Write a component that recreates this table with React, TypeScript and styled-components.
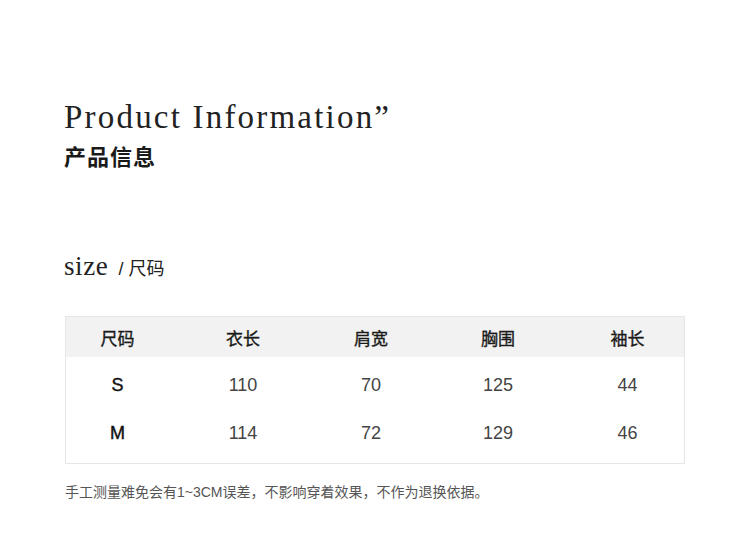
import styled, { createGlobalStyle } from 'styled-components';

const GlobalStyle = createGlobalStyle`
  html, body {
    margin: 0;
    padding: 0;
    background: #ffffff;
  }
`;

const sans = `Arial, "Liberation Sans", "Noto Sans CJK SC", sans-serif`;
const serif = `"Liberation Serif", "Times New Roman", "Noto Sans CJK SC", serif`;

const columns = ['尺码', '衣长', '肩宽', '胸围', '袖长'];
const rows = [
  ['S', '110', '70', '125', '44'],
  ['M', '114', '72', '129', '46'],
];

const Page = styled.div`
  width: 750px;
  height: 556px;
  box-sizing: border-box;
  padding: 98px 65px 0 64px;
  display: flex;
  flex-direction: column;
  color: #222;
`;

const Title = styled.h1`
  margin: 0;
  font-family: ${serif};
  font-weight: 400;
  font-size: 33px;
  line-height: 38px;
  letter-spacing: 2.2px;
  color: #222;
`;

const Subtitle = styled.h2`
  margin: 7px 0 0;
  font-family: ${sans};
  font-weight: 700;
  font-size: 22px;
  line-height: 30px;
  letter-spacing: 1px;
  color: #1a1a1a;
`;

const SizeLabel = styled.div`
  margin-top: 78px;
  display: flex;
  align-items: baseline;
  gap: 10px;
`;

const SizeWord = styled.span`
  font-family: ${serif};
  font-size: 27px;
  line-height: 30px;
  letter-spacing: 0.6px;
  color: #222;
`;

const SizeCn = styled.span`
  font-family: ${sans};
  font-size: 18px;
  color: #222;
`;

const Table = styled.div`
  margin: 35px 0 0 1px;
  width: 620px;
  box-sizing: border-box;
  border: 1px solid #e6e6e6;
  display: flex;
  flex-direction: column;
`;

const Row = styled.div`
  display: grid;
  grid-template-columns: 103px 148px 108px 146px 1fr;
`;

const HeadRow = styled(Row)`
  height: 40px;
  background: #f2f2f2;
`;

const Body = styled.div`
  padding: 4px 0 6px;
`;

const HeadCell = styled.div`
  display: flex;
  align-items: center;
  justify-content: center;
  font-family: ${sans};
  font-size: 17px;
  color: #1a1a1a;
  -webkit-text-stroke: 0.35px #1a1a1a;
`;

const Cell = styled.div<{ $strong?: boolean }>`
  height: 48px;
  display: flex;
  align-items: center;
  justify-content: center;
  font-family: ${sans};
  font-size: 18px;
  color: ${({ $strong }) => ($strong ? '#111' : '#444')};
  -webkit-text-stroke: ${({ $strong }) => ($strong ? '0.4px #111' : '0')};
`;

const Note = styled.p`
  margin: 18px 0 0 1px;
  font-family: ${sans};
  font-size: 14px;
  line-height: 20px;
  color: #555;
`;

export default function App() {
  return (
    <>
      <GlobalStyle />
      <Page>
        <Title>Product Information”</Title>
        <Subtitle>产品信息</Subtitle>
        <SizeLabel>
          <SizeWord>size</SizeWord>
          <SizeCn>/ 尺码</SizeCn>
        </SizeLabel>
        <Table>
          <HeadRow>
            {columns.map((c) => (
              <HeadCell key={c}>{c}</HeadCell>
            ))}
          </HeadRow>
          <Body>
            {rows.map((r) => (
              <Row key={r[0]}>
                {r.map((v, i) => (
                  <Cell key={i} $strong={i === 0}>
                    {v}
                  </Cell>
                ))}
              </Row>
            ))}
          </Body>
        </Table>
        <Note>手工测量难免会有1~3CM误差，不影响穿着效果，不作为退换依据。</Note>
      </Page>
    </>
  );
}
